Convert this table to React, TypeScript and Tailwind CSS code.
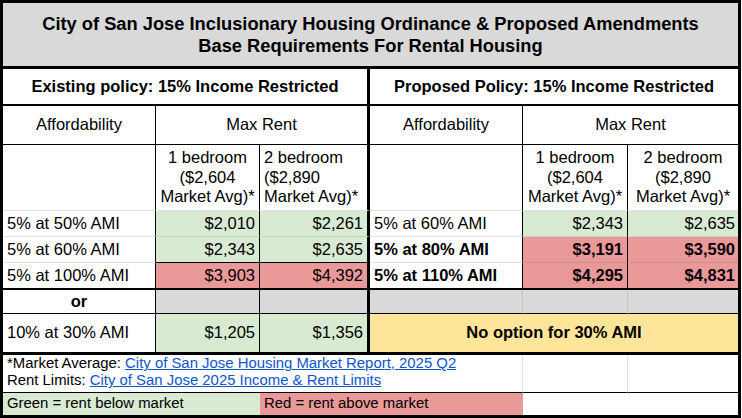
import React from 'react'

const base = "flex items-center border-black"

function Cell({ className = '', children }: { className?: string; children?: React.ReactNode }) {
  return <div className={`${base} ${className}`}>{children}</div>
}

export default function App() {
  return (
    <div className="w-[741px] h-[418px] border-[3px] border-black bg-white text-black font-['Liberation_Sans',Arial,sans-serif] text-[16.5px] leading-[19.5px]">
      <div className="grid grid-cols-[153px_104px_110px_153px_105px_110px] grid-rows-[66px_37px_39px_66px_26px_26px_27px_24px_41px_38px_22px]">
        {/* title */}
        <Cell className="col-span-6 justify-center border-b-[3px] bg-[#d9d9d9] text-center font-bold text-[18.3px] leading-[22px]">
          <div>
            City of San Jose Inclusionary Housing Ordinance &amp; Proposed Amendments
            <br />
            Base Requirements For Rental Housing
          </div>
        </Cell>

        {/* policy headers */}
        <Cell className="col-span-3 justify-center border-b-2 border-r-[3px] font-bold">
          Existing policy: 15% Income Restricted
        </Cell>
        <Cell className="col-span-3 justify-center border-b-2 font-bold">
          Proposed Policy: 15% Income Restricted
        </Cell>

        {/* affordability / max rent */}
        <Cell className="justify-center border-b border-r">Affordability</Cell>
        <Cell className="col-span-2 justify-center border-b border-r-[3px]">Max Rent</Cell>
        <Cell className="justify-center border-b border-r">Affordability</Cell>
        <Cell className="col-span-2 justify-center border-b">Max Rent</Cell>

        {/* bedroom headers */}
        <Cell className="border-r border-b border-b-[#e2e2e2]" />
        <Cell className="justify-center text-center border-r border-b border-b-[#e2e2e2]">
          <div>1 bedroom<br />($2,604<br />Market Avg)*</div>
        </Cell>
        <Cell className="pl-[4px] border-r-[3px] border-b border-b-[#e2e2e2]">
          <div>2 bedroom<br />($2,890<br />Market Avg)*</div>
        </Cell>
        <Cell className="border-r border-b border-b-[#e2e2e2]" />
        <Cell className="justify-center text-center border-r border-b border-b-[#e2e2e2]">
          <div>1 bedroom<br />($2,604<br />Market Avg)*</div>
        </Cell>
        <Cell className="justify-center text-center border-b border-b-[#e2e2e2]">
          <div>2 bedroom<br />($2,890<br />Market Avg)*</div>
        </Cell>

        {/* row 1 */}
        <Cell className="pl-[4px] border-r border-b border-b-[#e2e2e2]">5% at 50% AMI</Cell>
        <Cell className="justify-end pr-[4px] bg-[#d9ead3] border-r border-b border-b-[#c6d4c0]">$2,010</Cell>
        <Cell className="justify-end pr-[4px] bg-[#d9ead3] border-r-[3px] border-b border-b-[#c6d4c0]">$2,261</Cell>
        <Cell className="pl-[4px] border-r border-b border-b-[#e2e2e2]">5% at 60% AMI</Cell>
        <Cell className="justify-end pr-[4px] bg-[#d9ead3] border-r border-b border-b-[#c6d4c0]">$2,343</Cell>
        <Cell className="justify-end pr-[3px] bg-[#d9ead3] border-b border-b-[#c6d4c0]">$2,635</Cell>

        {/* row 2 */}
        <Cell className="pl-[4px] border-r border-b border-b-[#e2e2e2]">5% at 60% AMI</Cell>
        <Cell className="justify-end pr-[4px] bg-[#d9ead3] border-r border-b">$2,343</Cell>
        <Cell className="justify-end pr-[4px] bg-[#d9ead3] border-r-[3px] border-b">$2,635</Cell>
        <Cell className="pl-[4px] font-bold border-r border-b border-b-[#e2e2e2]">5% at 80% AMI</Cell>
        <Cell className="justify-end pr-[4px] font-bold bg-[#ea9999] border-r border-b border-b-[#d58b8b]">$3,191</Cell>
        <Cell className="justify-end pr-[3px] font-bold bg-[#ea9999] border-b border-b-[#d58b8b]">$3,590</Cell>

        {/* row 3 */}
        <Cell className="pl-[4px] border-r border-b-2">5% at 100% AMI</Cell>
        <Cell className="justify-end pr-[4px] bg-[#ea9999] border-r border-b-2">$3,903</Cell>
        <Cell className="justify-end pr-[4px] bg-[#ea9999] border-r-[3px] border-b-2">$4,392</Cell>
        <Cell className="pl-[4px] font-bold border-r border-b-2">5% at 110% AMI</Cell>
        <Cell className="justify-end pr-[4px] font-bold bg-[#ea9999] border-r border-b-2">$4,295</Cell>
        <Cell className="justify-end pr-[3px] font-bold bg-[#ea9999] border-b-2">$4,831</Cell>

        {/* or */}
        <Cell className="justify-center font-bold border-r border-b">or</Cell>
        <Cell className="bg-[#d9d9d9] border-r border-b" />
        <Cell className="bg-[#d9d9d9] border-r-[3px] border-b" />
        <Cell className="bg-[#d9d9d9] border-r border-r-[#c4c4c4] border-b" />
        <Cell className="bg-[#d9d9d9] border-r border-r-[#c4c4c4] border-b" />
        <Cell className="bg-[#d9d9d9] border-b" />

        {/* 30% */}
        <Cell className="pl-[4px] border-r border-b-[3px]">10% at 30% AMI</Cell>
        <Cell className="justify-end pr-[4px] bg-[#d9ead3] border-r border-b-[3px]">$1,205</Cell>
        <Cell className="justify-end pr-[4px] bg-[#d9ead3] border-r-[3px] border-b-[3px]">$1,356</Cell>
        <Cell className="col-span-3 justify-center font-bold bg-[#ffe599] border-b-[3px]">No option for 30% AMI</Cell>

        {/* footnotes */}
        <Cell className="col-span-4 items-start pl-[4px] text-[14.9px] leading-[17.4px] border-r border-r-[#e2e2e2] border-b">
          <div>
            *Market Average:{' '}
            <a href="#" className="text-[#1155cc] underline">City of San Jose Housing Market Report, 2025 Q2</a>
            <br />
            Rent Limits:{' '}
            <a href="#" className="text-[#1155cc] underline">City of San Jose 2025 Income &amp; Rent Limits</a>
          </div>
        </Cell>
        <Cell className="border-r border-r-[#e2e2e2] border-b" />
        <Cell className="border-b" />

        {/* legend */}
        <Cell className="col-span-2 pl-[4px] text-[14.9px] bg-[#d9ead3]">Green = rent below market</Cell>
        <Cell className="col-span-2 pl-[4px] text-[14.9px] bg-[#ea9999]">Red = rent above market</Cell>
        <Cell className="col-span-2" />
      </div>
    </div>
  )
}
